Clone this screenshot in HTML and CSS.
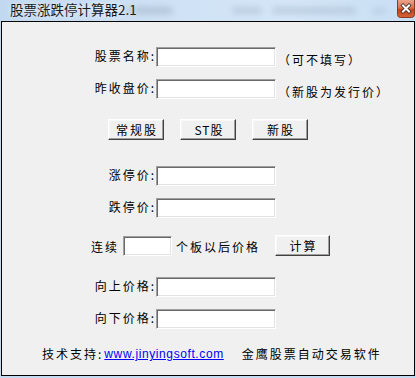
FILE: index.html
```html
<!DOCTYPE html>
<html lang="zh-CN">
<head>
<meta charset="utf-8">
<title>股票涨跌停计算器2.1</title>
<link rel="stylesheet" href="styles.css">
</head>
<body>
<div class="window">
  <div class="titlebar">
    <span class="blur b1"></span>
    <span class="blur b2"></span>
    <span class="blur b3"></span>
    <span class="blur b4"></span>
    <span class="title">股票涨跌停计算器2.1</span>
    <span class="close">
      <svg width="18" height="18" viewBox="0 0 18 18">
        <defs>
          <linearGradient id="cg" x1="0" y1="0" x2="0" y2="1">
            <stop offset="0" stop-color="#eba28a"/>
            <stop offset="0.45" stop-color="#d9714f"/>
            <stop offset="0.55" stop-color="#c4421c"/>
            <stop offset="1" stop-color="#d2643a"/>
          </linearGradient>
        </defs>
        <path d="M0.5 0 V14.5 Q0.5 17.5 3.5 17.5 H14.5 Q17.5 17.5 17.5 14.5 V0" fill="url(#cg)" stroke="#8a3a24" stroke-width="1"/>
        <path d="M6 5.5 L12 11.5 M12 5.5 L6 11.5" stroke="#3a2a28" stroke-width="3.6" stroke-linecap="square"/>
        <path d="M6 5.5 L12 11.5 M12 5.5 L6 11.5" stroke="#ffffff" stroke-width="2" stroke-linecap="square"/>
      </svg>
    </span>
  </div>
  <div class="panel">
    <div class="row r1">
      <span class="lbl">股票名称:</span>
      <span class="field"></span>
      <span class="hint">（可不填写）</span>
    </div>
    <div class="row r2">
      <span class="lbl">昨收盘价:</span>
      <span class="field"></span>
      <span class="hint">（新股为发行价）</span>
    </div>
    <div class="btnrow">
      <span class="btn">常规股</span>
      <span class="btn st">ST股</span>
      <span class="btn nw">新股</span>
    </div>
    <div class="row r3">
      <span class="lbl">涨停价:</span>
      <span class="field"></span>
    </div>
    <div class="row r2">
      <span class="lbl">跌停价:</span>
      <span class="field"></span>
    </div>
    <div class="row lianxu">
      <span class="txt">连续</span>
      <span class="field small"></span>
      <span class="txt after">个板以后价格</span>
      <span class="btn calc">计算</span>
    </div>
    <div class="row r5">
      <span class="lbl">向上价格:</span>
      <span class="field"></span>
    </div>
    <div class="row r2">
      <span class="lbl">向下价格:</span>
      <span class="field"></span>
    </div>
    <div class="footer">
      <span class="txt">技术支持:</span>
      <a class="link" href="#">www.jinyingsoft.com</a>
      <span class="txt brand">金鹰股票自动交易软件</span>
    </div>
  </div>
</div>
</body>
</html>
```
FILE: styles.css
```css
html, body {
  margin: 0;
  padding: 0;
  background: #c9ddf1;
}
.window {
  width: 416px;
  height: 378px;
  background: #c4daf0;
  display: flex;
  flex-direction: column;
  overflow: hidden;
  font-family: "Noto Sans CJK SC", "Liberation Sans", sans-serif;
  font-size: 12px;
  color: #000;
}
.titlebar {
  position: relative;
  height: 21px;
  flex: none;
  display: flex;
  align-items: flex-start;
  background: linear-gradient(to right, #c0d8f0 0%, #cfe2f5 40%, #d4e6f7 70%, #c8def3 100%);
}
.blur {
  position: absolute;
  background: #9fb2c6;
  filter: blur(3px);
  opacity: 0.6;
  border-radius: 4px;
}
.b1 { left: 125px; top: 7px; width: 48px; height: 7px; }
.b2 { left: 232px; top: 7px; width: 30px; height: 7px; opacity: 0.45; }
.b3 { left: 272px; top: 7px; width: 84px; height: 7px; opacity: 0.45; }
.b4 { left: 372px; top: 8px; width: 14px; height: 6px; opacity: 0.35; }
.title {
  position: relative;
  margin-left: 10px;
  margin-top: 1px;
  font-size: 13.5px;
  line-height: 17px;
  color: #1a1a1a;
  text-shadow: 0 0 6px rgba(255, 255, 255, 0.9);
}
.close {
  position: relative;
  margin-left: auto;
  margin-right: 1px;
  width: 18px;
  height: 18px;
}
.close svg { display: block; }
.panel {
  margin: 0 1px;
  height: 355px;
  box-sizing: border-box;
  border: 1px solid #000;
  background: #f0f0f0;
  display: flex;
  flex-direction: column;
  flex: none;
}
.row {
  display: flex;
  align-items: flex-start;
  height: 20px;
  letter-spacing: 2px;
}
.r1 { margin-top: 25px; }
.r2 { margin-top: 12px; }
.r3 { margin-top: 26px; }
.r5 { margin-top: 20px; }
.lbl {
  width: 154px;
  text-align: right;
  line-height: 18px;
  flex: none;
}
.field {
  width: 120px;
  height: 20px;
  box-sizing: border-box;
  background: #fff;
  border-style: solid;
  border-width: 1px;
  border-color: #a0a0a0 #ffffff #ffffff #a0a0a0;
  box-shadow: inset 1px 1px 0 #696969, inset -1px -1px 0 #e3e3e3;
  flex: none;
}
.hint {
  margin-left: 2px;
  padding-top: 4px;
  line-height: 18px;
  white-space: nowrap;
}
.btnrow {
  display: flex;
  margin-top: 20px;
  padding-left: 106px;
  height: 21px;
  letter-spacing: 2px;
}
.btn {
  width: 56px;
  height: 21px;
  box-sizing: border-box;
  display: flex;
  align-items: center;
  justify-content: center;
  padding-left: 2px;
  border-style: solid;
  border-width: 1px;
  border-color: #ffffff #404040 #404040 #ffffff;
  box-shadow: inset -1px -1px 0 #a0a0a0, inset 1px 1px 0 #f8f8f8;
  background: #f0f0f0;
  line-height: 18px;
  flex: none;
}
.st { margin-left: 16px; letter-spacing: 1px; }
.nw { margin-left: 16px; }
.lianxu {
  margin-top: 17px;
  height: 22px;
  padding-left: 89px;
}
.txt {
  line-height: 18px;
  white-space: nowrap;
}
.lianxu .txt { padding-top: 3px; }
.small {
  width: 49px;
  margin-left: 4px;
  margin-top: 1px;
}
.after { margin-left: 4px; }
.calc {
  margin-left: 15px;
  width: 55px;
  height: 21px;
}
.footer {
  display: flex;
  align-items: center;
  margin-top: 17px;
  padding-left: 40px;
  height: 16px;
  letter-spacing: 2px;
}
.link {
  font-family: "Liberation Sans", sans-serif;
  font-size: 12px;
  letter-spacing: 0.6px;
  color: #0000ff;
  text-decoration: underline;
  margin-left: 1px;
  line-height: 16px;
}
.brand { margin-left: 18px; }
```
